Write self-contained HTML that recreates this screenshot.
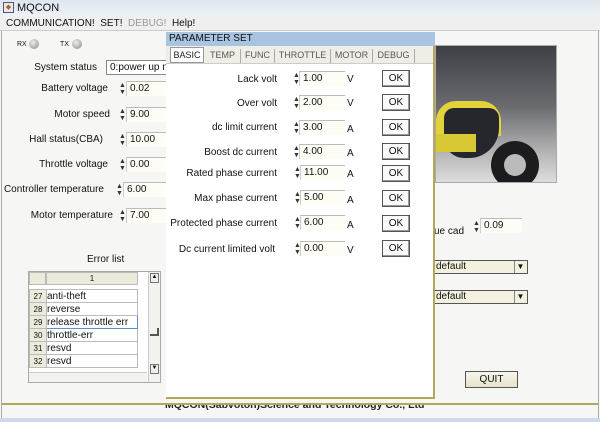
<!DOCTYPE html><html><head><style>
*{margin:0;padding:0;box-sizing:border-box}
body{width:600px;height:422px;overflow:hidden;background:#f6f6f4;font-family:"Liberation Sans","DejaVu Sans",sans-serif;font-size:10px;color:#111;position:relative}
.a{position:absolute;white-space:nowrap}
.lbl{position:absolute;text-align:right;white-space:nowrap}
.inp{position:absolute;background:#fdfdf6;border-top:1px solid #bbb;border-left:1px solid #ccc;height:15px;padding-left:3px;line-height:14px;font-size:10px;white-space:nowrap;overflow:hidden}
.sp{position:absolute;width:6px;height:14px;font-size:7px;line-height:7px;color:#333}
.ok{position:absolute;width:28px;height:17px;border:1px solid #555;background:#fafafa;text-align:center;line-height:15px;font-size:10px;box-shadow:inset -1px -1px #999}
.tab{position:absolute;top:49px;height:14px;line-height:13px;font-size:9px;color:#555;text-align:center;border-right:1px solid #aaa}
.row td{border:1px solid #bbb;height:13px;font-size:10px}
</style></head><body>
<div class="a" style="left:0;top:0;width:600px;height:16px;background:linear-gradient(#dde6ef,#eef1f5)"></div>
<div class="a" style="left:3px;top:2px;width:11px;height:11px;border:1px solid #557;background:#e8e8f0;font-size:7px;text-align:center;line-height:9px;color:#a60">◆</div>
<div class="a" style="left:17px;top:2px;font-size:11px">MQCON</div>
<div class="a" style="left:0;top:16px;width:600px;height:15px;background:#efefef;border-bottom:1px solid #ccc"></div>
<div class="a" style="left:6px;top:18px;font-size:10px">COMMUNICATION! &nbsp;SET! &nbsp;<span style="color:#999">DEBUG!</span> &nbsp;Help!</div>
<div class="a" style="left:1px;top:31px;width:1px;height:388px;background:#aaa"></div>
<div class="a" style="left:598px;top:31px;width:1px;height:388px;background:#aaa"></div>
<div class="a" style="left:17px;top:41px;font-size:7px">RX</div>
<div class="a" style="left:29px;top:39px;width:10px;height:10px;border-radius:50%;background:radial-gradient(circle at 40% 35%,#eee,#888)"></div>
<div class="a" style="left:60px;top:41px;font-size:7px">TX</div>
<div class="a" style="left:72px;top:39px;width:10px;height:10px;border-radius:50%;background:radial-gradient(circle at 40% 35%,#eee,#888)"></div>
<div class="lbl" style="right:503px;top:62px">System status</div>
<div class="inp" style="left:106px;top:60px;width:62px;border:1px solid #888;background:#fff">0:power up no</div>
<div class="lbl" style="right:492px;top:83px">Battery voltage</div>
<div class="lbl" style="right:490px;top:109px">Motor speed</div>
<div class="lbl" style="right:497px;top:134px">Hall status(CBA)</div>
<div class="lbl" style="right:492px;top:159px">Throttle voltage</div>
<div class="lbl" style="right:496px;top:184px">Controller temperature</div>
<div class="lbl" style="right:487px;top:210px">Motor temperature</div>
<div class="sp" style="left:119px;top:82px">▲<br>▼</div><div class="inp" style="left:126px;top:81px;width:45px">0.02</div>
<div class="sp" style="left:119px;top:108px">▲<br>▼</div><div class="inp" style="left:126px;top:107px;width:45px">9.00</div>
<div class="sp" style="left:119px;top:133px">▲<br>▼</div><div class="inp" style="left:126px;top:132px;width:45px">10.00</div>
<div class="sp" style="left:119px;top:158px">▲<br>▼</div><div class="inp" style="left:126px;top:157px;width:45px">0.00</div>
<div class="sp" style="left:116px;top:183px">▲<br>▼</div><div class="inp" style="left:123px;top:182px;width:45px">6.00</div>
<div class="sp" style="left:119px;top:209px">▲<br>▼</div><div class="inp" style="left:126px;top:208px;width:45px">7.00</div>
<div class="a" style="left:87px;top:254px">Error list</div>
<div class="a" style="left:28px;top:271px;width:133px;height:112px;background:#fff;border:1px solid #aaa"></div>
<div class="a" style="left:29px;top:272px;width:17px;height:13px;background:#eceadb;border:1px solid #bbb"></div>
<div class="a" style="left:46px;top:272px;width:92px;height:13px;background:#eceadb;border:1px solid #bbb;text-align:center;font-size:8px;line-height:11px">1</div>
<div class="a" style="left:148px;top:272px;width:12px;height:110px;background:#f3f3ee;border-left:1px solid #ccc"></div>
<div class="a" style="left:150px;top:273px;width:9px;height:10px;border:1px solid #777;font-size:6px;text-align:center;background:#eee">▲</div>
<div class="a" style="left:150px;top:328px;width:9px;height:8px;border-right:2px solid #555;border-bottom:2px solid #555"></div>
<div class="a" style="left:150px;top:364px;width:9px;height:10px;border:1px solid #777;font-size:6px;text-align:center;background:#eee">▼</div>
<div class="a" style="left:29px;top:372px;width:118px;height:10px;background:#f3f3ee;border-top:1px solid #ccc"></div>
<table class="a" style="left:29px;top:289px;border-collapse:collapse;width:109px">
<tr class="row"><td style="width:17px;background:#eceadb;font-size:8px;text-align:center">27</td><td>anti-theft</td></tr>
<tr class="row"><td style="background:#eceadb;font-size:8px;text-align:center">28</td><td>reverse</td></tr>
<tr class="row"><td style="background:#eceadb;font-size:8px;text-align:center">29</td><td style="border:1px solid #5b8fd0">release throttle err</td></tr>
<tr class="row"><td style="background:#eceadb;font-size:8px;text-align:center">30</td><td>throttle-err</td></tr>
<tr class="row"><td style="background:#eceadb;font-size:8px;text-align:center">31</td><td>resvd</td></tr>
<tr class="row"><td style="background:#eceadb;font-size:8px;text-align:center">32</td><td>resvd</td></tr>
</table>
<!-- picture -->
<div class="a" style="left:435px;top:45px;width:122px;height:138px;background:linear-gradient(180deg,#3e4046 0%,#6a6c70 45%,#b8b8b8 80%,#ddd 100%);border:1px solid #aaa;overflow:hidden">
<div class="a" style="left:0;top:55px;width:65px;height:35px;background:#e3d23a;border-radius:20px 20px 0 0"></div>
<div class="a" style="left:8px;top:62px;width:55px;height:50px;background:#26272c;border-radius:10px 10px 30px 20px"></div>
<div class="a" style="left:55px;top:95px;width:48px;height:48px;border-radius:50%;background:#1c1c1e"></div>
<div class="a" style="left:68px;top:108px;width:22px;height:22px;border-radius:50%;background:#bbb"></div>
<div class="a" style="left:0;top:88px;width:40px;height:18px;background:#d8c934"></div>
</div>
<div class="a" style="left:434px;top:226px">ue cad</div>
<div class="sp" style="left:473px;top:220px">▲<br>▼</div><div class="inp" style="left:480px;top:218px;width:42px">0.09</div>
<div class="a" style="left:434px;top:260px;width:94px;height:14px;border:1px solid #555;background:#f3f0e0;line-height:12px;padding-left:1px">default<span style="position:absolute;right:1px;top:0;width:12px;height:12px;border-left:1px solid #888;font-size:8px;text-align:center">▼</span></div>
<div class="a" style="left:434px;top:290px;width:94px;height:14px;border:1px solid #555;background:#f3f0e0;line-height:12px;padding-left:1px">default<span style="position:absolute;right:1px;top:0;width:12px;height:12px;border-left:1px solid #888;font-size:8px;text-align:center">▼</span></div>
<div class="a" style="left:465px;top:371px;width:53px;height:17px;border:1px solid #555;background:linear-gradient(#f8f6ea,#e6e2cc);text-align:center;line-height:15px">QUIT</div>
<div class="a" style="left:2px;top:403px;width:596px;height:2px;background:#b3a75c"></div>
<div class="a" style="left:165px;top:405px;font-weight:bold;font-size:10.5px;color:#222;width:262px;height:6px;overflow:hidden;line-height:0px">MQCON(Sabvoton)Science and Technology Co., Ltd</div>
<div class="a" style="left:0;top:418px;width:600px;height:4px;background:#cfdbe8"></div>
<!-- parameter window -->
<div class="a" style="left:166px;top:32px;width:269px;height:367px;background:#fff;border-right:2px solid #b3a75c;border-bottom:2px solid #b3a75c"></div>
<div class="a" style="left:166px;top:32px;width:269px;height:14px;background:#a8c4e0;padding-left:3px;font-size:10px;line-height:14px">PARAMETER SET</div>
<div class="a" style="left:166px;top:46px;width:267px;height:18px;background:#efeee6;border-bottom:1px solid #ccc"></div>
<div class="tab" style="left:170px;width:34px;top:47px;height:16px;background:#fff;border:1px solid #999;color:#222;line-height:14px">BASIC</div>
<div class="tab" style="left:205px;width:36px">TEMP</div>
<div class="tab" style="left:241px;width:34px">FUNC</div>
<div class="tab" style="left:275px;width:56px">THROTTLE</div>
<div class="tab" style="left:331px;width:42px">MOTOR</div>
<div class="tab" style="left:373px;width:42px">DEBUG</div>
<div class="lbl" style="right:323px;top:74px">Lack volt</div>
<div class="lbl" style="right:323px;top:98px">Over volt</div>
<div class="lbl" style="right:323px;top:122px">dc limit current</div>
<div class="lbl" style="right:323px;top:147px">Boost dc current</div>
<div class="lbl" style="right:323px;top:168px">Rated phase current</div>
<div class="lbl" style="right:323px;top:193px">Max phase current</div>
<div class="lbl" style="right:323px;top:218px">Protected phase current</div>
<div class="lbl" style="right:325px;top:244px">Dc current limited volt</div>
<div class="sp" style="left:293px;top:72px">▲<br>▼</div><div class="inp" style="left:299px;top:71px;width:46px">1.00</div><div class="a" style="left:347px;top:74px">V</div><div class="ok" style="left:382px;top:70px">OK</div>
<div class="sp" style="left:293px;top:96px">▲<br>▼</div><div class="inp" style="left:299px;top:95px;width:46px">2.00</div><div class="a" style="left:347px;top:98px">V</div><div class="ok" style="left:382px;top:94px">OK</div>
<div class="sp" style="left:293px;top:121px">▲<br>▼</div><div class="inp" style="left:299px;top:120px;width:46px">3.00</div><div class="a" style="left:347px;top:124px">A</div><div class="ok" style="left:382px;top:119px">OK</div>
<div class="sp" style="left:293px;top:145px">▲<br>▼</div><div class="inp" style="left:299px;top:144px;width:46px">4.00</div><div class="a" style="left:347px;top:148px">A</div><div class="ok" style="left:382px;top:143px">OK</div>
<div class="sp" style="left:294px;top:166px">▲<br>▼</div><div class="inp" style="left:300px;top:165px;width:45px">11.00</div><div class="a" style="left:347px;top:169px">A</div><div class="ok" style="left:382px;top:165px">OK</div>
<div class="sp" style="left:294px;top:191px">▲<br>▼</div><div class="inp" style="left:300px;top:190px;width:45px">5.00</div><div class="a" style="left:347px;top:195px">A</div><div class="ok" style="left:382px;top:190px">OK</div>
<div class="sp" style="left:294px;top:216px">▲<br>▼</div><div class="inp" style="left:300px;top:215px;width:45px">6.00</div><div class="a" style="left:347px;top:220px">A</div><div class="ok" style="left:382px;top:215px">OK</div>
<div class="sp" style="left:294px;top:242px">▲<br>▼</div><div class="inp" style="left:300px;top:241px;width:45px">0.00</div><div class="a" style="left:347px;top:245px">V</div><div class="ok" style="left:382px;top:240px">OK</div>
</body></html>
